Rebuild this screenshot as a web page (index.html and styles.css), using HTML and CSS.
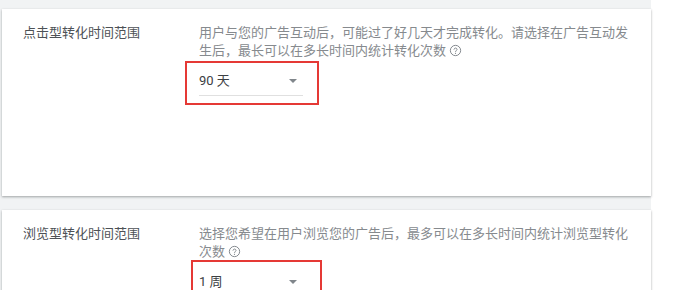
FILE: index.html
```html
<!DOCTYPE html>
<html lang="zh-CN">
<head>
<meta charset="utf-8">
<link rel="stylesheet" href="styles.css">
</head>
<body>
<div class="page">
  <section class="card card-tall">
    <div class="label">点击型转化时间范围</div>
    <div class="body">
      <p class="desc">用户与您的广告互动后，可能过了好几天才完成转化。请选择在广告互动发生后，最长可以在多长时间内统计转化次数 <svg class="help" viewBox="0 0 24 24" width="13" height="13"><circle cx="12" cy="12" r="9.5" fill="none" stroke="#80868b" stroke-width="1.8"/><path d="M9.3 9.6a2.8 2.8 0 0 1 5.5 .4c0 1.9-2.8 2.3-2.8 4.2" fill="none" stroke="#80868b" stroke-width="1.8" stroke-linecap="round"/><circle cx="12" cy="17.3" r="1.1" fill="#80868b"/></svg></p>
      <div class="select">
        <span class="value">90 天</span>
        <span class="arrow"></span>
        <span class="mark mark-a"></span>
      </div>
    </div>
  </section>
  <section class="card">
    <div class="label">浏览型转化时间范围</div>
    <div class="body">
      <p class="desc">选择您希望在用户浏览您的广告后，最多可以在多长时间内统计浏览型转化次数 <svg class="help" viewBox="0 0 24 24" width="13" height="13"><circle cx="12" cy="12" r="9.5" fill="none" stroke="#80868b" stroke-width="1.8"/><path d="M9.3 9.6a2.8 2.8 0 0 1 5.5 .4c0 1.9-2.8 2.3-2.8 4.2" fill="none" stroke="#80868b" stroke-width="1.8" stroke-linecap="round"/><circle cx="12" cy="17.3" r="1.1" fill="#80868b"/></svg></p>
      <div class="select">
        <span class="value">1 周</span>
        <span class="arrow"></span>
        <span class="mark mark-b"></span>
      </div>
    </div>
  </section>
</div>
</body>
</html>
```

FILE: styles.css
```css
html, body {
  margin: 0;
  padding: 0;
  background: #ffffff;
}
body {
  font-family: Roboto, "Noto Sans CJK SC", "Noto Sans", sans-serif;
  font-size: 13px;
  color: #3c4043;
  overflow: hidden;
}
.page {
  width: 649px;
  height: 290px;
  background: #f1f3f4;
  padding: 9px 0 0 2px;
  box-sizing: content-box;
}
.card {
  background: #ffffff;
  box-shadow: 0 1px 2px rgba(60, 64, 67, 0.35), 0 1px 3px rgba(60, 64, 67, 0.12);
  display: grid;
  grid-template-columns: 197px 1fr;
  padding-top: 15px;
  box-sizing: border-box;
  margin-bottom: 14px;
}
.card-tall {
  height: 187px;
}
.label {
  padding-left: 21px;
  line-height: 18px;
  color: #4d5156;
}
.body {
  width: 436px;
}
.desc {
  margin: 0;
  line-height: 18px;
  color: #868a8e;
}
.help {
  vertical-align: -2px;
}
.select {
  position: relative;
  width: 104px;
  margin-top: 10px;
  padding-bottom: 4px;
  border-bottom: 1px solid #e0e0e0;
  display: flex;
  align-items: center;
  justify-content: space-between;
  line-height: 20px;
}
.value {
  color: #3c4043;
  padding-top: 1px;
}
.arrow {
  width: 0;
  height: 0;
  margin-right: 6px;
  border-left: 4.5px solid transparent;
  border-right: 4.5px solid transparent;
  border-top: 4.5px solid #80868b;
}
.mark {
  position: absolute;
  border: 2px solid #e53935;
  box-sizing: border-box;
}
.mark-a {
  left: -14px;
  top: -9px;
  width: 134px;
  height: 44px;
}
.mark-b {
  left: -8px;
  top: -11px;
  width: 131px;
  height: 44px;
}
```
